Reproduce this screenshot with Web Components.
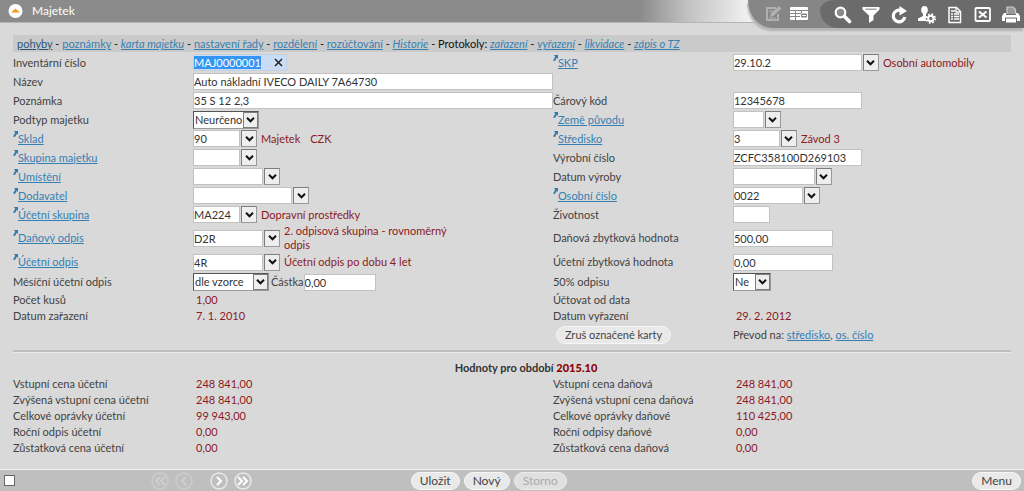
<!DOCTYPE html>
<html lang="cs">
<head>
<meta charset="utf-8">
<title>Majetek</title>
<style>
html, body { height: 100%; margin: 0; }
body {
  --ink: #424242;
  --value: #8b1a22;
  --link: #3580b3;
  background: #d9d9d9;
  color: var(--ink);
  font: 11px/16px "Lato", "Liberation Sans", sans-serif;
}
</style>
</head>
<body>
<asset-window>
  <title-bar slot="top" heading="Majetek"></title-bar>
  <link-bar slot="main"></link-bar>
  <field-grid slot="main">
    <record-field label="Inventární číslo" kind="clear" value="MAJ0000001" size="94"></record-field>
    <record-field label="SKP" linked kind="lookup" value="29.10.2" size="129" note="Osobní automobily"></record-field>
    <record-field label="Název" kind="text" value="Auto nákladní IVECO DAILY 7A64730"></record-field>
    <record-field></record-field>
    <record-field label="Poznámka" kind="text" value="35 S 12 2,3"></record-field>
    <record-field label="Čárový kód" kind="text" value="12345678" size="129"></record-field>
    <record-field label="Podtyp majetku" kind="select" value="Neurčeno" size="66"></record-field>
    <record-field label="Země původu" linked kind="lookup" size="31"></record-field>
    <record-field label="Sklad" linked kind="lookup" value="90" size="47" note="Majetek" extra="CZK"></record-field>
    <record-field label="Středisko" linked kind="lookup" value="3" size="47" note="Závod 3"></record-field>
    <record-field label="Skupina majetku" linked kind="lookup" size="47"></record-field>
    <record-field label="Výrobní číslo" kind="text" value="ZCFC358100D269103" size="129"></record-field>
    <record-field label="Umístění" linked kind="lookup" size="70"></record-field>
    <record-field label="Datum výroby" kind="lookup" size="82"></record-field>
    <record-field label="Dodavatel" linked kind="lookup" size="99"></record-field>
    <record-field label="Osobní číslo" linked kind="lookup" value="0022" size="70"></record-field>
    <record-field label="Účetní skupina" linked kind="lookup" value="MA224" size="47" note="Dopravní prostředky"></record-field>
    <record-field label="Životnost" kind="text" size="37"></record-field>
    <record-field class="tall" label="Daňový odpis" linked kind="lookup" value="D2R" size="70" note="2. odpisová skupina - rovnoměrný odpis"></record-field>
    <record-field class="tall" label="Daňová zbytková hodnota" kind="text" value="500,00" size="100"></record-field>
    <record-field class="mid" label="Účetní odpis" linked kind="lookup" value="4R" size="70" note="Účetní odpis po dobu 4 let"></record-field>
    <record-field class="mid" label="Účetní zbytková hodnota" kind="text" value="0,00" size="100"></record-field>
    <record-field class="mid" label="Měsíční účetní odpis" kind="select" value="dle vzorce" size="76" amount="0,00"></record-field>
    <record-field class="mid" label="50% odpisu" kind="select" value="Ne" size="38"></record-field>
    <record-field class="low" label="Počet kusů" kind="static" value="1,00"></record-field>
    <record-field class="low" label="Účtovat od data" kind="static"></record-field>
    <record-field class="low" label="Datum zařazení" kind="static" value="7. 1. 2010"></record-field>
    <record-field class="low" label="Datum vyřazení" kind="static" value="29. 2. 2012"></record-field>
    <record-field></record-field>
    <transfer-row></transfer-row>
  </field-grid>
  <period-heading slot="main" period="2015.10">Hodnoty pro období</period-heading>
  <field-grid slot="main">
    <record-field class="low" label="Vstupní cena účetní" kind="static" value="248 841,00"></record-field>
    <record-field class="low" label="Vstupní cena daňová" kind="static" value="248 841,00"></record-field>
    <record-field class="low" label="Zvýšená vstupní cena účetní" kind="static" value="248 841,00"></record-field>
    <record-field class="low" label="Zvýšená vstupní cena daňová" kind="static" value="248 841,00"></record-field>
    <record-field class="low" label="Celkové oprávky účetní" kind="static" value="99 943,00"></record-field>
    <record-field class="low" label="Celkové oprávky daňové" kind="static" value="110 425,00"></record-field>
    <record-field class="low" label="Roční odpis účetní" kind="static" value="0,00"></record-field>
    <record-field class="low" label="Roční odpisy daňové" kind="static" value="0,00"></record-field>
    <record-field class="low" label="Zůstatková cena účetní" kind="static" value="0,00"></record-field>
    <record-field class="low" label="Zůstatková cena daňová" kind="static" value="0,00"></record-field>
  </field-grid>
  <action-bar slot="bottom"></action-bar>
</asset-window>

<script>
class Part extends HTMLElement {
  connectedCallback() {
    if (this.shadowRoot) return;
    this.attachShadow({ mode: 'open' }).innerHTML =
      `<style>*{box-sizing:border-box}${this.constructor.css}</style>${this.html()}`;
    this.ready();
  }
  ready() {}
  attr(name) { return this.getAttribute(name) || ''; }
}

customElements.define('asset-window', class extends Part {
  static css = `
    :host { display: flex; flex-direction: column; min-height: 100vh; }
    main { flex: 1; padding: 12px 13px 8px; }`;
  html() {
    return `<slot name="top"></slot><main><slot name="main"></slot></main><slot name="bottom"></slot>`;
  }
});

customElements.define('title-bar', class extends Part {
  static css = `
    :host { display: block; position: relative; }
    header { display: flex; align-items: center; gap: 9px; height: 23px; padding-left: 8px;
      background: linear-gradient(90deg, #8b8b8b 640px, #c4c4c4 690px, #e2e2e2 730px, #f2f2f2 750px);
      border-bottom: 1px solid #b5b5b5; color: #fff; }
    h1 { margin: 0; font-size: 12px; line-height: 22px; font-weight: 400; }
    button { border: 0; padding: 0; background: none; display: block; height: 16px; }
    svg { display: block; }`;
  html() {
    return `<header>
      <button aria-label="Sbalit"><svg width="15" height="16" viewBox="0 0 15 16"><circle cx="7.5" cy="8" r="7" fill="#fff"/><path d="M3 9.600 7.500 5.400 12 9.600Z" fill="#e9a01d"/></svg></button>
      <h1>${this.attr('heading')}</h1></header><tool-strip></tool-strip>`;
  }
});

const TOOLS = {
  edit: ['Upravit', '<g opacity=".35"><path d="M12 3H3v12h11V9" fill="none" stroke="#fff" stroke-width="2"/><path d="M6 12l1-4 8-7 2.500 2.500-8 7.500z" fill="#fff"/><path d="M5 6h4M5 13h7" stroke="#fff"/></g>'],
  table: ['Tabulka', '<rect y="2" width="18" height="13" rx="1" fill="#fff"/><path d="M0 5.500h18M0 8.500h11M0 11.500h10M5.500 5v10M11.500 5v3" stroke="#858585"/><rect x="11" y="8.500" width="6" height="4" rx="1" fill="#858585"/><path d="M12 10.500h4" stroke="#fff"/>'],
  search: ['Hledat', '<circle cx="6.500" cy="6.500" r="4.800" fill="#8a8a8a" stroke="#fff" stroke-width="2.200"/><path d="M10.500 10.500 15.500 15.500" stroke="#fff" stroke-width="3.600" stroke-linecap="round"/>'],
  filter: ['Filtr', '<path d="M.5 1h17v2.500L11.500 9.500V14l-4.500 3V9.500L.5 3.500Z" fill="#fff"/><path d="M3.500 3.200h11" stroke="#777"/>'],
  refresh: ['Obnovit', '<path d="M11 4.500A5.800 5.800 0 1 0 14.800 11" fill="none" stroke="#fff" stroke-width="3.200"/><path d="M9.500 0 17 5 9.500 9.500Z" fill="#fff"/>'],
  user: ['Uživatel', '<ellipse cx="6.500" cy="4" rx="3.300" ry="4" fill="#fff"/><path d="M5 7h3v3l3 1v4H0v-2.500L5 10Z" fill="#fff"/><circle cx="12.800" cy="12.500" r="5" fill="#6d6d6d"/><circle cx="12.800" cy="12.500" r="2.700" fill="none" stroke="#fff" stroke-width="2"/><circle cx="12.800" cy="12.500" r="4.300" fill="none" stroke="#fff" stroke-width="1.800" stroke-dasharray="1.800 1.577"/>'],
  report: ['Sestava', '<path d="M3 1.500h7.500l4 4v11H3Z" fill="none" stroke="#fff" stroke-width="1.500"/><path d="M10 1.500v4.500h4.500M5 5h4M5 8h2M8 8h5M5 10.500h2M8 10.500h5M5 13h2M8 13h5" fill="none" stroke="#fff" stroke-width="1.300"/>'],
  excel: ['Excel', '<rect x="1.500" y="2" width="14.500" height="13" rx="1" fill="none" stroke="#fff" stroke-width="1.800"/><path d="M5 5.500 12.500 11.500M12.500 5.500 5 11.500" stroke="#fff" stroke-width="2.200"/>'],
  print: ['Tisk', '<path d="M5 8V1h6l2.500 2.500V8" fill="#999" stroke="#ccc" stroke-width="1.200"/><path d="M2 7h2v2h10V7h2l2 3v5H0v-5Z" fill="#fff"/><rect x="3.500" y="12" width="11" height="5" fill="#fff" stroke="#6d6d6d"/>'],
};
customElements.define('tool-strip', class extends Part {
  static css = `
    :host { position: absolute; top: 0; right: 0; display: flex; background: #868686;
      border-bottom-left-radius: 24px 28px; box-shadow: -1px 3px 2px #b4b4b4; }
    div { display: flex; align-items: center; height: 28px; gap: 10px; }
    .light { padding: 0 12px 0 16px; gap: 8px; }
    .dark { background: #6b6b6b; border-radius: 20px 0 0 24px / 14px 0 0 24px; padding: 2px 4px 0 14px; }
    button { border: 0; padding: 0; background: none; height: 18px; }
    svg { display: block; }`;
  html() {
    const draw = key => `<button aria-label="${TOOLS[key][0]}"><svg width="18" height="18" viewBox="0 0 18 18">${TOOLS[key][1]}</svg></button>`;
    return `<div class="light">${['edit', 'table'].map(draw).join('')}</div>
      <div class="dark">${['search', 'filter', 'refresh', 'user', 'report', 'excel', 'print'].map(draw).join('')}</div>`;
  }
});

customElements.define('link-bar', class extends Part {
  static css = `
    :host { display: block; }
    nav { background: #cacaca; color: #111; padding: 1px 4px; height: 17px; white-space: nowrap; margin-bottom: 1px; }
    a { color: var(--link); }
    a.on { color: #2a5878; }`;
  html() {
    return `<nav><a class="on" href="#">pohyby</a> - <a href="#">poznámky</a> - <a href="#"><i>karta majetku</i></a> - <a href="#">nastavení řady</a> - <a href="#">rozdělení</a> - <a href="#">rozúčtování</a> - <a href="#"><i>Historie</i></a> - Protokoly: <a href="#"><i>zařazení</i></a> - <a href="#"><i>vyřazení</i></a> - <a href="#"><i>likvidace</i></a> - <a href="#"><i>zápis o TZ</i></a></nav>`;
  }
});

customElements.define('field-grid', class extends Part {
  static css = `:host { display: grid; grid-template-columns: 541fr 459fr; }`;
  html() { return `<slot></slot>`; }
});

const CHEVRON = '<svg width="9" height="6" viewBox="0 0 9 6"><path d="M1 .8 4.500 4.300 8 .8" fill="none" stroke="#111" stroke-width="2"/></svg>';
const FIELD_CSS = `
  :host { display: flex; align-items: center; min-height: 19px; min-width: 0; }
  :host(.tall) { min-height: 28px; }
  :host(.mid) { min-height: 20px; }
  :host(.low) { min-height: 16px; }
  .name { flex: 0 0 180px; display: flex; align-items: center; }
  .name svg { align-self: flex-start; }
  a { color: var(--link); }
  input, select { font: inherit; color: #333; background: #fff; border: 1px solid #c2c2c2; border-radius: 0;
    height: 17px; margin: 0; padding: 0; outline: 0; }
  input.fill { flex: 1; width: 0; min-width: 0; }
  .pick { width: 16px; height: 17px; margin-left: 1px; padding: 0; display: grid; place-items: center;
    background: #eee; border: 1px solid #7d7d7d; border-right-color: #999; border-bottom-color: #999; }
  .pick svg { display: block; }
  .note { color: var(--value); margin-left: 4px; max-width: 180px; line-height: 14px; }
  .note + .note { margin-left: 10px; }
  .drop { position: relative; display: flex; }
  .drop select { appearance: none; height: 18px; padding-left: 1px; border-color: #555 #999 #999 #555; }
  .drop span { position: absolute; right: 1px; top: 1px; width: 15px; height: 16px; display: grid; place-items: center;
    background: #eee; border: 1px solid #7d7d7d; pointer-events: none; }
  .amount { display: flex; align-items: center; margin-left: 2px; }
  .amount input { width: 72px; }
  .clear { position: relative; display: flex; }
  .clear input { background: #c9dcf5; border-color: #c5d0de; }
  .clear input::selection { background: #3595f5; color: #fff; }
  .clear button { position: absolute; right: 4px; top: 4px; border: 0; padding: 0; background: none; }
  .clear svg { display: block; }
  output { color: var(--value); margin-left: 3px; }`;

customElements.define('record-field', class extends Part {
  static css = FIELD_CSS;
  control() {
    const value = this.attr('value'), size = this.attr('size');
    const input = `<input id="c" type="text" value="${value}" ${size ? `style="width:${size}px"` : 'class="fill"'}>`;
    switch (this.attr('kind')) {
      case 'text': return input;
      case 'clear': return `<span class="clear">${input}<button aria-label="Vymazat"><svg width="9" height="9" viewBox="0 0 9 9"><path d="M1 1 8 8M8 1 1 8" stroke="#222" stroke-width="1.500"/></svg></button></span>`;
      case 'lookup': return `${input}<button class="pick" aria-label="Vybrat">${CHEVRON}</button>`;
      case 'select': return `<span class="drop"><select id="c" style="width:${size}px"><option>${value}</option></select><span>${CHEVRON}</span></span>`;
      case 'static': return `<output id="c">${value}</output>`;
    }
    return '';
  }
  html() {
    const label = this.attr('label');
    if (!label) return '';
    const name = this.hasAttribute('linked')
      ? `<svg width="5" height="6" viewBox="0 0 5 6"><path d="M1 0h4v4L3.800 2.800 2 6 0 5.500 2.200 1.800Z" fill="#2f7ab0"/></svg><a href="#">${label}</a>` : label;
    const note = ['note', 'extra'].filter(n => this.attr(n)).map(n => `<span class="note">${this.attr(n)}</span>`).join('');
    const amount = this.hasAttribute('amount')
      ? `<label class="amount">Částka<input type="text" value="${this.attr('amount')}"></label>` : '';
    return `<label class="name" for="c">${name}</label>${this.control()}${note}${amount}`;
  }
  ready() {
    if (this.attr('kind') === 'clear') {
      const input = this.shadowRoot.querySelector('input');
      input.focus();
      input.select();
    }
  }
});

customElements.define('transfer-row', class extends Part {
  static css = `
    :host { display: flex; align-items: center; height: 22px; }
    div { flex: 0 0 180px; padding-left: 3px; }
    a { color: var(--link); }`;
  html() {
    return `<div><pill-button>Zruš označené karty</pill-button></div><span>Převod na: <a href="#">středisko</a>, <a href="#">os. číslo</a></span>`;
  }
});

customElements.define('period-heading', class extends Part {
  static css = `
    :host { display: block; border-top: 2px solid #bdbdbd; margin-top: 4px; }
    h2 { margin: 0; padding: 7px 0 0 28px; border-top: 1px solid #eaeaea; font-size: inherit; line-height: 16px; text-align: center; color: #333; }
    b { color: #8b0000; }`;
  html() { return `<h2><slot></slot> <b>${this.attr('period')}</b></h2>`; }
});

customElements.define('pill-button', class extends Part {
  static css = `
    :host { display: inline-block; }
    button { display: block; font: inherit; color: #444; height: 18px; line-height: 14px; padding: 0 8px;
      background: #e9e9e9; border: 1px solid #f6f6f6; border-radius: 9px; white-space: nowrap; }
    button:disabled { color: #aaa; background: #e0e0e0; border-color: #ececec; }`;
  html() { return `<button ${this.hasAttribute('disabled') ? 'disabled' : ''}><slot></slot></button>`; }
});

customElements.define('action-bar', class extends Part {
  static css = `
    :host { display: block; }
    footer { display: grid; grid-template-columns: 40% auto 1fr; align-items: center; height: 22px; padding: 0 3px 0 4px;
      background: #bfbfbf; border-top: 1px solid #f2f2f2; }
    div { display: flex; align-items: center; }
    input { appearance: none; width: 11px; height: 11px; margin: 0 136px 0 0; background: #fff; border: 1px solid #666; }
    .step { border: 0; padding: 0; background: none; margin-right: 6px; height: 18px; }
    .step.gap { margin-right: 17px; }
    svg { display: block; }
    .mid { gap: 4px; font-size: 12px; }
    .end { justify-content: flex-end; font-size: 12px; }`;
  html() {
    const step = (name, d, off, gap) => `<button class="step ${gap ? 'gap' : ''}" aria-label="${name}" ${off ? 'disabled' : ''}><svg width="18" height="18" viewBox="0 0 18 18" fill="none" stroke="${off ? '#d0d0d0' : '#fff'}"><circle cx="9" cy="9" r="8" stroke="${off ? '#cdcdcd' : '#e8e8e8'}" stroke-width="1.500"/><path d="${d}" stroke-width="2"/></svg></button>`;
    return `<footer><div><input type="checkbox" aria-label="Označit">
      ${step('První', 'M9 5 5 9l4 4M14 5l-4 4 4 4', true)}${step('Předchozí', 'M11 5 7 9l4 4', true, true)}${step('Další', 'M7 5l4 4-4 4')}${step('Poslední', 'M4 5l4 4-4 4M9 5l4 4-4 4')}</div>
      <div class="mid"><pill-button>Uložit</pill-button><pill-button>Nový</pill-button><pill-button disabled>Storno</pill-button></div>
      <div class="end"><pill-button>Menu</pill-button></div></footer>`;
  }
});
</script>
</body>
</html>
